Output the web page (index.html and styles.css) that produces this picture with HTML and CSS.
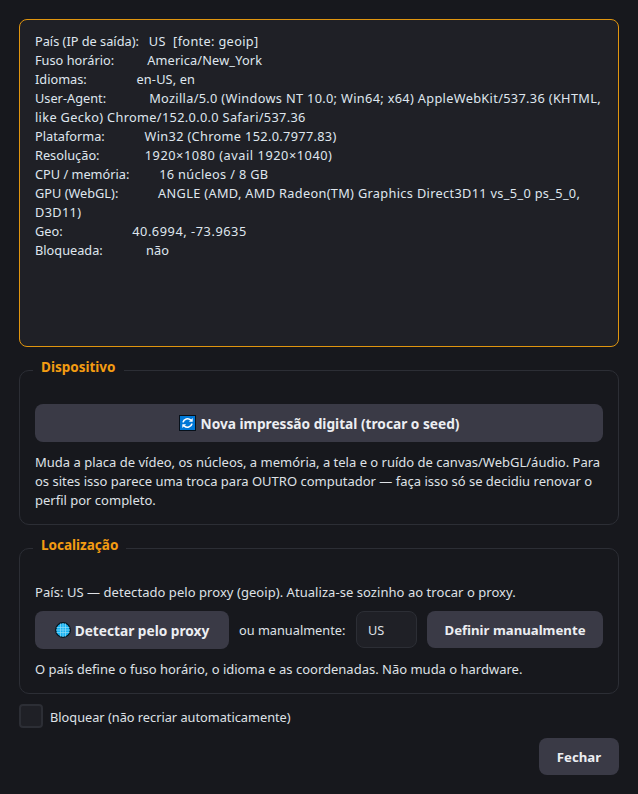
FILE: index.html
```html
<!DOCTYPE html>
<html lang="pt">
<head>
<meta charset="utf-8">
<title>Perfil</title>
<link rel="stylesheet" href="styles.css">
</head>
<body>
<main class="dialog">
<div class="info">
<div class="line">País (IP de saída):   <span class="val">US  [fonte: geoip]</span></div>
<div class="line">Fuso horário:          <span class="val-text">America/New_York</span></div>
<div class="line">Idiomas:               <span class="val-text">en-US, en</span></div>
<div class="line">User-Agent:             <span class="val">Mozilla/5.0 (Windows NT 10.0; Win64; x64) AppleWebKit/537.36 (KHTML,</span></div>
<div class="line val">like Gecko) Chrome/152.0.0.0 Safari/537.36</div>
<div class="line">Plataforma:            <span class="val">Win32 (Chrome 152.0.7977.83)</span></div>
<div class="line">Resolução:             &#8201;<span class="val-num">1920×1080 (avail 1920×1040)</span></div>
<div class="line">CPU / memória:         <span class="val">16 núcleos / 8 GB</span></div>
<div class="line">GPU (WebGL):            <span class="val">ANGLE (AMD, AMD Radeon(TM) Graphics Direct3D11 vs_5_0 ps_5_0,</span></div>
<div class="line val">D3D11)</div>
<div class="line">Geo:                     <span class="val-num">40.6994, -73.9635</span></div>
<div class="line">Bloqueada:             <span class="val-text">não</span></div>
</div>
<fieldset class="group group-device">
<legend>Dispositivo</legend>
<button class="btn btn-wide" type="button">
<svg class="icon" viewBox="0 0 17 16" aria-hidden="true"><rect x="0.5" y="0.5" width="16" height="15" fill="#0078d7" stroke="#07101a"/><path d="M4 7.4a4.6 4.6 0 0 1 7.8-2.2M13 8.6a4.6 4.6 0 0 1-7.8 2.2" fill="none" stroke="#fff" stroke-width="1.7"/><path d="M13.7 3v3.8H9.9zM3.3 13V9.2h3.8z" fill="#fff"/></svg>
<span>Nova impressão digital (trocar o seed)</span>
</button>
<p class="note note-device">Muda a placa de vídeo, os núcleos, a memória, a tela e o ruído de canvas/WebGL/áudio. Para os sites isso parece uma troca para OUTRO computador — faça isso só se decidiu renovar o perfil por completo.</p>
</fieldset>
<fieldset class="group group-loc">
<legend>Localização</legend>
<p class="note note-top">País: US — detectado pelo proxy (geoip). Atualiza-se sozinho ao trocar o proxy.</p>
<div class="row">
<button class="btn btn-detect" type="button">
<svg class="icon icon-globe" viewBox="0 0 16 16" aria-hidden="true"><circle cx="8" cy="8" r="7.3" fill="#18b2f2" stroke="#07131c" stroke-width="1.3"/><path d="M1.5 5.5h13M1 8h14M1.5 10.5h13M5.5 1.5v13M8 1v14M10.5 1.5v13" stroke="#8fdcf8" stroke-width=".7" fill="none"/></svg>
<span>Detectar pelo proxy</span>
</button>
<span class="or">ou manualmente:</span>
<input class="country" type="text" value="US" aria-label="País">
<button class="btn btn-set" type="button">Definir manualmente</button>
</div>
<p class="note note-bottom">O país define o fuso horário, o idioma e as coordenadas. Não muda o hardware.</p>
</fieldset>
<label class="lock"><span class="check"></span><span class="lock-text">Bloquear (não recriar automaticamente)</span></label>
<div class="actions"><button class="btn btn-close" type="button">Fechar</button></div>
</main>
</body>
</html>
```
FILE: styles.css
```css
* { box-sizing: border-box; }
html, body { margin: 0; height: 100%; }
body {
  background: #17181d;
  color: #dfe1e6;
  font-family: "Noto Sans", "Open Sans", sans-serif;
  font-size: 12.75px;
  line-height: 19px;
  overflow: hidden;
}
.dialog { padding: 19px 19px 0; width: 638px; }
.info {
  height: 328px;
  padding: 12px 15px;
  background: #1f2026;
  border: 1px solid #e0950f;
  border-radius: 8px;
  color: #dfe6ee;
}
.line { white-space: pre-wrap; }
.val { letter-spacing: .33px; }
.val-text { letter-spacing: .15px; }
.val-num { letter-spacing: .55px; }
.group {
  margin: 11px 0 0;
  padding: 0 15px;
  border: 1px solid #2c2e35;
  border-radius: 10px;
  min-width: 0;
}
.group legend {
  margin-left: -2px;
  padding: 0 8px 6px;
  color: #f39c12;
  font-weight: 700;
  font-size: 13.5px;
  line-height: 19px;
}
.group-device { height: 167px; padding-top: 21px; }
.group-loc { height: 158px; padding-top: 0; }
.btn {
  display: flex;
  align-items: center;
  justify-content: center;
  gap: 5px;
  border: 0;
  border-radius: 8px;
  background: #3a3a46;
  color: #eceef2;
  font-family: inherit;
  font-size: 13.2px;
  font-weight: 700;
  padding: 0;
}
.btn-wide { width: 100%; height: 38px; font-size: 13.7px; }
.icon { width: 17px; height: 16px; flex: none; }
.icon-globe { width: 16px; height: 16px; }
.note { margin: 0; font-size: 13px; }
.note-device { margin-top: 11px; }
.note-top { margin-top: 22px; letter-spacing: .05px; }
.row { display: flex; align-items: flex-start; margin-top: 9px; height: 38px; }
.btn-detect { width: 194px; height: 38px; gap: 4px; font-size: 13.7px; }
.or { margin: 0 10px; width: 107px; white-space: nowrap; line-height: 38px; }
.country {
  width: 61px;
  height: 37px;
  padding: 0 11px;
  background: #1f2026;
  border: 1px solid #2c2e35;
  border-radius: 8px;
  color: #dfe1e6;
  font: inherit;
}
.btn-set { width: 176px; height: 37px; margin-left: 10px; }
.note-bottom { margin-top: 11px; }
.lock { display: flex; align-items: center; gap: 7px; margin-top: 10px; height: 24px; }
.lock-text { padding-top: 2px; }
.check {
  width: 24px;
  height: 24px;
  background: #1f2026;
  border: 2px solid #2c2e35;
  border-radius: 4px;
}
.actions { display: flex; justify-content: flex-end; margin-top: 10px; }
.btn-close { width: 80px; height: 37px; }
```
